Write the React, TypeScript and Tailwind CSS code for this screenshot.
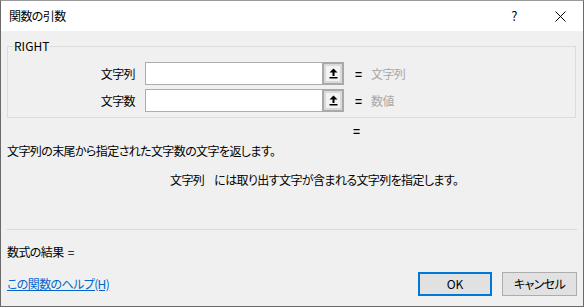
import React from "react";

const font = "font-['Noto_Sans_CJK_JP','Noto_Sans',sans-serif] [font-feature-settings:'palt'] tracking-[-0.6px]";

function RefButton() {
  return (
    <div className="w-[22px] h-[23px] border-2 border-[#a9a9a9] bg-[#dadada] p-[2px] flex">
      <div className="flex-1 bg-[#f3f3f3] flex items-center justify-center">
        <svg width="9" height="11" viewBox="0 0 9 11">
          <polygon points="4.5,0.5 8.5,4.5 0.5,4.5" fill="#000" />
          <rect x="3.5" y="4" width="2" height="4" fill="#000" />
          <rect x="0.5" y="9" width="8" height="1.5" fill="#000" />
        </svg>
      </div>
    </div>
  );
}

function ArgRow({ label, value }: { label: string; value: string }) {
  return (
    <div className="flex items-center h-[23px]">
      <div className="w-[127px] text-right text-[12px] leading-[16px] text-black">{label}</div>
      <div className="ml-[10px] flex h-[23px] border border-[#adadad] border-r-0 bg-white w-[177px]" />
      <RefButton />
      <div className="ml-[11px] text-[12px] leading-[16px] font-bold text-black w-[7px]">=</div>
      <div className="ml-[9px] text-[12px] leading-[16px] text-[#a8a8a8]">{value}</div>
    </div>
  );
}

export default function App() {
  return (
    <div className={`w-[584px] h-[307px] border border-[#6a6a6a] border-t-[#9a9a9a] bg-[#f0f0f0] flex flex-col ${font}`}>
      <div className="h-[30px] bg-white flex items-center shrink-0">
        <div className="ml-[8px] text-[12px] leading-[16px] text-black flex-1">関数の引数</div>
        <div className="w-[46px] h-[30px] flex items-center justify-center text-[13px] text-black">?</div>
        <div className="w-[46px] h-[30px] flex items-center justify-center">
          <svg width="11" height="11" viewBox="0 0 11 11">
            <path d="M0.5 0.5 L10.5 10.5 M10.5 0.5 L0.5 10.5" stroke="#000" strokeWidth="1" />
          </svg>
        </div>
      </div>
      <div className="flex-1 flex flex-col px-[6px]">
        <div className="relative mt-[15px] mr-[1px] border border-[#dcdcdc] pt-[15px] pb-[5px] flex flex-col gap-[4px]">
          <div className="absolute left-[5px] top-[-9px] px-[1px] bg-[#f0f0f0] text-[12px] leading-[16px] text-black tracking-normal">RIGHT</div>
          <ArgRow label="文字列" value="文字列" />
          <ArgRow label="文字数" value="数値" />
        </div>
        <div className="mt-[5px] h-[16px] text-[12px] leading-[16px] pl-[346px] font-bold text-black">=</div>
        <div className="mt-[4px] h-[16px] text-[12px] leading-[16px] text-black">文字列の末尾から指定された文字数の文字を返します。</div>
        <div className="mt-[13px] h-[16px] text-[12px] leading-[16px] text-black pl-[163px] flex">
          <span>文字列</span>
          <span className="ml-[10px]">には取り出す文字が含まれる文字列を指定します。</span>
        </div>
        <div className="mt-[41px] h-px bg-[#dadada]" />
        <div className="mt-[14px] h-[16px] text-[12px] leading-[16px] text-black">数式の結果 <span className="ml-[2px]">=</span></div>
        <div className="mt-[12px] h-[24px] flex items-center">
          <a className="text-[12px] leading-[16px] text-[#0066cc] underline flex-1">この関数のヘルプ(H)</a>
          <button className="w-[74px] h-[24px] border-2 border-[#0078d7] bg-[#e1e1e1] text-[12px] text-black tracking-normal">OK</button>
          <button className="ml-[10px] w-[75px] h-[24px] border border-[#adadad] bg-[#e1e1e1] text-[12px] text-black">キャンセル</button>
        </div>
      </div>
    </div>
  );
}
